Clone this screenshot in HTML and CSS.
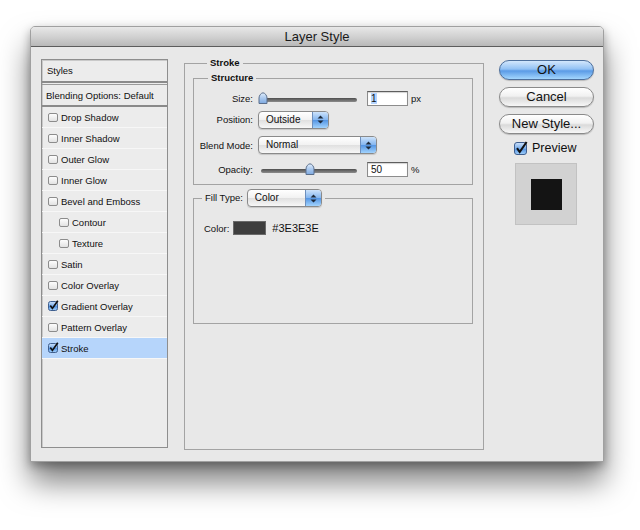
FILE: index.html
```html
<!DOCTYPE html>
<html lang="en">
<head>
    <meta charset="UTF-8">
    <meta name="viewport" content="width=device-width, initial-scale=1.0">
    <title>Layer Style</title>
    <link rel="stylesheet" href="styles.css">
</head>
<body>
<div class="window">
    <div class="titlebar">Layer Style</div>
    <div class="content">

        <div class="style-list">
            <div class="list-head">Styles</div>
            <div class="list-head blend">Blending Options: Default</div>
            <div class="list-item"><span class="cb"></span>Drop Shadow</div>
            <div class="list-item"><span class="cb"></span>Inner Shadow</div>
            <div class="list-item"><span class="cb"></span>Outer Glow</div>
            <div class="list-item"><span class="cb"></span>Inner Glow</div>
            <div class="list-item"><span class="cb"></span>Bevel and Emboss</div>
            <div class="list-item sub"><span class="cb"></span>Contour</div>
            <div class="list-item sub"><span class="cb"></span>Texture</div>
            <div class="list-item"><span class="cb"></span>Satin</div>
            <div class="list-item"><span class="cb"></span>Color Overlay</div>
            <div class="list-item">
                <svg class="cb-on" width="11" height="11" viewBox="0 0 11 11"><rect x="0.5" y="1.5" width="9" height="9" rx="2" fill="url(#cbBlue)" stroke="#3f5f8f"/><path d="M2.3 5.6 L4.4 8.4 L9.8 0.8" fill="none" stroke="#111" stroke-width="1.7"/></svg>Gradient Overlay
            </div>
            <div class="list-item"><span class="cb"></span>Pattern Overlay</div>
            <div class="list-item active">
                <svg class="cb-on" width="11" height="11" viewBox="0 0 11 11"><rect x="0.5" y="1.5" width="9" height="9" rx="2" fill="url(#cbBlue)" stroke="#3f5f8f"/><path d="M2.3 5.6 L4.4 8.4 L9.8 0.8" fill="none" stroke="#111" stroke-width="1.7"/></svg>Stroke
            </div>
        </div>

        <fieldset class="panel">
            <legend>Stroke</legend>

            <fieldset class="group structure">
                <legend>Structure</legend>
                <div class="form-grid">
                    <span class="form-label">Size:</span>
                    <div class="control">
                        <div class="slider">
                            <div class="slider-track"></div>
                            <svg class="slider-thumb" style="left:0px" width="10" height="12" viewBox="0 0 10 12"><path d="M1 11.5 V6 C1 3.5 3 1 5 0.8 C7 1 9 3.5 9 6 V11.5 Z" fill="url(#thumbBlue)" stroke="#5b6f8c"/></svg>
                        </div>
                        <div class="field"><span class="sel">1</span></div>
                        <span class="unit">px</span>
                    </div>

                    <span class="form-label">Position:</span>
                    <div class="control">
                        <div class="popup popup-position">
                            <span class="popup-text">Outside</span>
                            <span class="popup-arrows"><svg width="7" height="9" viewBox="0 0 7 9"><path d="M3.5 0.5 L6.5 3.5 H0.5 Z M3.5 8.5 L6.5 5.5 H0.5 Z" fill="#1e2a3a"/></svg></span>
                        </div>
                    </div>

                    <span class="form-label">Blend Mode:</span>
                    <div class="control">
                        <div class="popup popup-blend">
                            <span class="popup-text">Normal</span>
                            <span class="popup-arrows"><svg width="7" height="9" viewBox="0 0 7 9"><path d="M3.5 0.5 L6.5 3.5 H0.5 Z M3.5 8.5 L6.5 5.5 H0.5 Z" fill="#1e2a3a"/></svg></span>
                        </div>
                    </div>

                    <span class="form-label">Opacity:</span>
                    <div class="control">
                        <div class="slider">
                            <div class="slider-track"></div>
                            <svg class="slider-thumb" style="left:47px" width="10" height="12" viewBox="0 0 10 12"><path d="M1 11.5 V6 C1 3.5 3 1 5 0.8 C7 1 9 3.5 9 6 V11.5 Z" fill="url(#thumbBlue)" stroke="#5b6f8c"/></svg>
                        </div>
                        <div class="field">50</div>
                        <span class="unit">%</span>
                    </div>
                </div>
            </fieldset>

            <fieldset class="group fill">
                <legend>
                    <span class="fill-label">Fill Type:</span>
                    <div class="popup popup-fill">
                        <span class="popup-text">Color</span>
                        <span class="popup-arrows"><svg width="7" height="9" viewBox="0 0 7 9"><path d="M3.5 0.5 L6.5 3.5 H0.5 Z M3.5 8.5 L6.5 5.5 H0.5 Z" fill="#1e2a3a"/></svg></span>
                    </div>
                </legend>
                <div class="color-row">
                    <span>Color:</span>
                    <span class="swatch"></span>
                    <span class="hex">#3E3E3E</span>
                </div>
            </fieldset>
        </fieldset>

        <div class="actions">
            <div class="btn btn-default">OK</div>
            <div class="btn">Cancel</div>
            <div class="btn">New Style...</div>
            <div class="preview-check">
                <svg width="14" height="14" viewBox="0 0 14 14"><rect x="0.5" y="1.5" width="12" height="12" rx="2.5" fill="url(#cbBlue)" stroke="#3f5f8f"/><path d="M3 7.2 L5.7 11 L12.6 1" fill="none" stroke="#111" stroke-width="2.1"/></svg>
                <span>Preview</span>
            </div>
            <div class="preview-box"><div class="preview-square"></div></div>
        </div>

    </div>
</div>

<svg width="0" height="0" class="defs">
    <defs>
        <linearGradient id="cbBlue" x1="0" y1="0" x2="0" y2="1">
            <stop offset="0" stop-color="#cfe3fb"/>
            <stop offset="0.5" stop-color="#78adec"/>
            <stop offset="0.51" stop-color="#4f8fe0"/>
            <stop offset="1" stop-color="#a5d3fc"/>
        </linearGradient>
        <linearGradient id="thumbBlue" x1="0" y1="0" x2="0" y2="1">
            <stop offset="0" stop-color="#e2eefb"/>
            <stop offset="0.5" stop-color="#a9c8ee"/>
            <stop offset="1" stop-color="#7ea9e0"/>
        </linearGradient>
    </defs>
</svg>
</body>
</html>
```

FILE: styles.css
```css
*{
    box-sizing: border-box;
}
body{
    margin: 0;
    min-height: 530px;
    padding-top: 26px;
    background: #fff;
    font-family: "Liberation Sans", Arial, sans-serif;
    font-size: 9.5px;
    color: #101010;
}
.defs{
    position: absolute;
}
.window{
    margin-left: 30px;
    width: 574px;
    height: 436px;
    background: #e8e8e8;
    border: 1px solid #a0a0a0;
    border-radius: 5px 5px 0 0;
    box-shadow: 0 20px 30px rgba(0,0,0,.5), 0 4px 10px rgba(0,0,0,.3);
}
.titlebar{
    height: 20px;
    line-height: 19px;
    text-align: center;
    font-size: 13px;
    color: #1a1a1a;
    background: linear-gradient(#e8e8e8, #cfcfcf 55%, #b8b8b8);
    border-bottom: 1px solid #5c5c5c;
    border-radius: 4px 4px 0 0;
}
.content{
    display: flex;
    align-items: flex-start;
    padding: 10px 9px 0 10px;
}

/* left list */
.style-list{
    width: 127px;
    height: 389px;
    margin-top: 2px;
    background: #ececec;
    border: 1px solid #8e8e8e;
    box-shadow: inset 1px 1px 0 #c9c9c9;
}
.list-head{
    height: 23px;
    line-height: 21px;
    padding-left: 5px;
    border-bottom: 2px solid #8a8a8a;
    margin-bottom: 1px;
}
.list-head.blend{
    height: 23px;
    padding-left: 4px;
    border-top: 1px solid #9a9a9a;
    margin-bottom: 0;
}
.list-item{
    display: flex;
    align-items: center;
    height: 21px;
    padding-left: 6px;
    border-bottom: 1px solid #f7f7f7;
}
.list-item.sub{
    padding-left: 17px;
}
.list-item.active{
    background: #b6d5fb;
}
.cb{
    width: 10px;
    height: 9px;
    margin-right: 3px;
    border: 1px solid #8c8c8c;
    border-radius: 2px;
    background: linear-gradient(#fdfdfd, #e2e2e2);
}
.cb-on{
    margin-right: 2px;
    margin-top: -2px;
}

/* middle panel */
fieldset{
    margin: 0;
    min-width: 0;
    border: 1px solid #a3a3a3;
}
legend{
    padding: 0 3px;
    line-height: 12px;
    font-weight: bold;
    font-size: 9.5px;
}
.panel{
    width: 300px;
    height: 393px;
    margin-left: 16px;
    padding: 3px 10px 0 8px;
}
.panel > legend{
    margin-left: 14px;
}
.group{
    width: 280px;
    padding: 0;
}
.structure{
    height: 113px;
}
.structure > legend{
    margin-left: 14px;
}
.form-grid{
    display: grid;
    grid-template-columns: 59px auto;
    grid-template-rows: 15px 19px 24px 17px;
    column-gap: 5px;
    row-gap: 4px;
    align-items: center;
    padding-top: 7px;
}
.form-label{
    text-align: right;
}
.control{
    display: flex;
    align-items: center;
}
.slider{
    position: relative;
    width: 102px;
    height: 13px;
    padding-top: 6px;
}
.slider-track{
    height: 4px;
    margin: 0 3px;
    border-radius: 2px;
    background: linear-gradient(#4e4e4e, #8c8c8c);
}
.slider-thumb{
    position: absolute;
    top: 0;
}
.field{
    width: 41px;
    height: 15px;
    margin-left: 7px;
    padding: 0 3px;
    line-height: 13px;
    font-size: 10px;
    background: #fff;
    border: 1px solid #8c8c8c;
    border-top-color: #5e5e5e;
    box-shadow: inset 0 1px 1px rgba(0,0,0,.18);
}
.sel{
    background: #b5d5ff;
}
.unit{
    margin-left: 3px;
}
.popup{
    display: flex;
    height: 18px;
    border: 1px solid #8a8a8a;
    border-radius: 4px;
    overflow: hidden;
    background: linear-gradient(#ffffff, #f2f2f2 48%, #e0e0e0 52%, #f7f7f7);
    box-shadow: 0 1px 1px rgba(0,0,0,.15);
    font-weight: normal;
}
.popup-position{
    width: 71px;
}
.popup-blend{
    width: 119px;
}
.popup-fill{
    width: 75px;
}
.popup-text{
    flex: 1;
    padding-left: 7px;
    line-height: 16px;
    font-size: 10px;
}
.popup-arrows{
    width: 16px;
    display: flex;
    align-items: center;
    justify-content: center;
    background: linear-gradient(#cde3fb, #86b7f0 48%, #5596e4 52%, #a2d3fd);
    border-left: 1px solid #6d8fbd;
}
.fill{
    height: 135px;
    margin-top: 4px;
}
.fill > legend{
    display: flex;
    align-items: center;
    margin-left: 8px;
    line-height: 18px;
}
.fill-label{
    font-weight: normal;
    margin-right: 4px;
}
.color-row{
    display: flex;
    align-items: center;
    margin-top: 14px;
    padding-left: 10px;
}
.swatch{
    width: 33px;
    height: 14px;
    margin-left: 4px;
    background: #3e3e3e;
    border: 1px solid #6a6a6a;
}
.hex{
    margin-left: 6px;
    font-size: 11px;
}

/* right buttons */
.actions{
    width: 95px;
    margin: 3px 0 0 15px;
    display: flex;
    flex-direction: column;
    gap: 7px;
}
.btn{
    height: 20px;
    border-radius: 10px;
    border: 1px solid #8a8a8a;
    background: linear-gradient(#ffffff, #f1f1f1 45%, #dadada 55%, #f7f7f7);
    box-shadow: 0 1px 1px rgba(0,0,0,.2);
    font-size: 13px;
    line-height: 18px;
    text-align: center;
    color: #111;
}
.btn-default{
    border-color: #4d6f9c;
    background: linear-gradient(#d3e7fc, #92c1f4 45%, #5b9be6 55%, #a3d6fe);
}
.preview-check{
    display: flex;
    align-items: center;
    gap: 4px;
    margin: 0 0 0 15px;
    font-size: 12.5px;
}
.preview-box{
    display: flex;
    align-items: center;
    justify-content: center;
    width: 62px;
    height: 62px;
    margin: 1px 0 0 16px;
    background: #d2d2d2;
    border: 1px solid #c2c2c2;
}
.preview-square{
    width: 31px;
    height: 31px;
    background: #141414;
}
```
